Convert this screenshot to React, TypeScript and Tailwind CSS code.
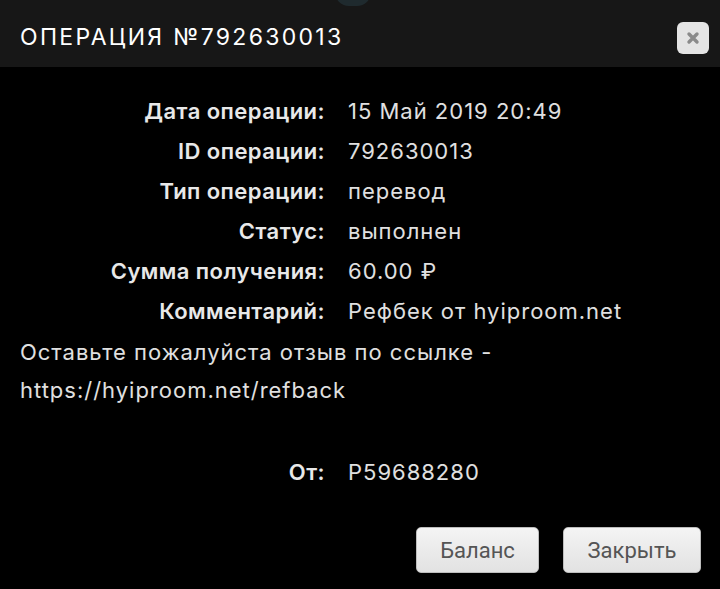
const rows: [string, string][] = [
  ["Дата операции:", "15 Май 2019 20:49"],
  ["ID операции:", "792630013"],
  ["Тип операции:", "перевод"],
  ["Статус:", "выполнен"],
  ["Сумма получения:", "60.00 ₽"],
  ["Комментарий:", "Рефбек от hyiproom.net"],
];

const Row = ({ label, value }: { label: string; value: string }) => (
  <div className="flex h-10 items-center">
    <div className="w-[348px] shrink-0 pr-[23px] text-right font-semibold tracking-[0.02em] text-[#e8e8e8]">
      {label}
    </div>
    <div className="text-[#e0e0e0]">{value}</div>
  </div>
);

export default function App() {
  return (
    <div className="relative h-[589px] w-[720px] overflow-hidden bg-black font-['Inter',sans-serif] text-[22px] tracking-[0.045em]">
      {/* header */}
      <div className="flex h-[67px] items-center justify-between bg-[#171717] pl-5 pr-[11px] pt-2">
        <h1 className="text-[23px] font-normal uppercase tracking-[0.1em] text-white">
          Операция №792630013
        </h1>
        <button className="flex h-8 w-8 items-center justify-center rounded-md bg-[#e4e4e4]">
          <svg width="14" height="14" viewBox="0 0 14 14">
            <path d="M3 3 L11 11 M11 3 L3 11" stroke="#8a8a8a" strokeWidth="3.4" strokeLinecap="round" />
          </svg>
        </button>
      </div>
      <div className="absolute left-[335px] top-[-22px] h-7 w-9 rounded-full bg-[#1f2a2e]" />

      {/* body */}
      <div className="pt-[24px]">
        {rows.map(([l, v]) => (
          <Row key={l} label={l} value={v} />
        ))}
        <div className="mt-[2px] px-5 leading-[38px] text-[#e0e0e0]">
          <p>Оставьте пожалуйста отзыв по ссылке -</p>
          <p>https://hyiproom.net/refback</p>
        </div>
        <div className="mt-[43px]">
          <Row label="От:" value="P59688280" />
        </div>
      </div>

      {/* footer buttons */}
      <div className="absolute bottom-[16px] right-[19px] flex gap-6 font-['Roboto',sans-serif] tracking-normal">
        <button className="h-[46px] w-[123px] rounded-[5px] border border-[#bdbdbd] bg-gradient-to-b from-[#f4f4f4] to-[#e2e2e2] text-[22px] text-[#555]">
          Баланс
        </button>
        <button className="h-[46px] w-[138px] rounded-[5px] border border-[#bdbdbd] bg-gradient-to-b from-[#f4f4f4] to-[#e2e2e2] text-[22px] text-[#555]">
          Закрыть
        </button>
      </div>
    </div>
  );
}
